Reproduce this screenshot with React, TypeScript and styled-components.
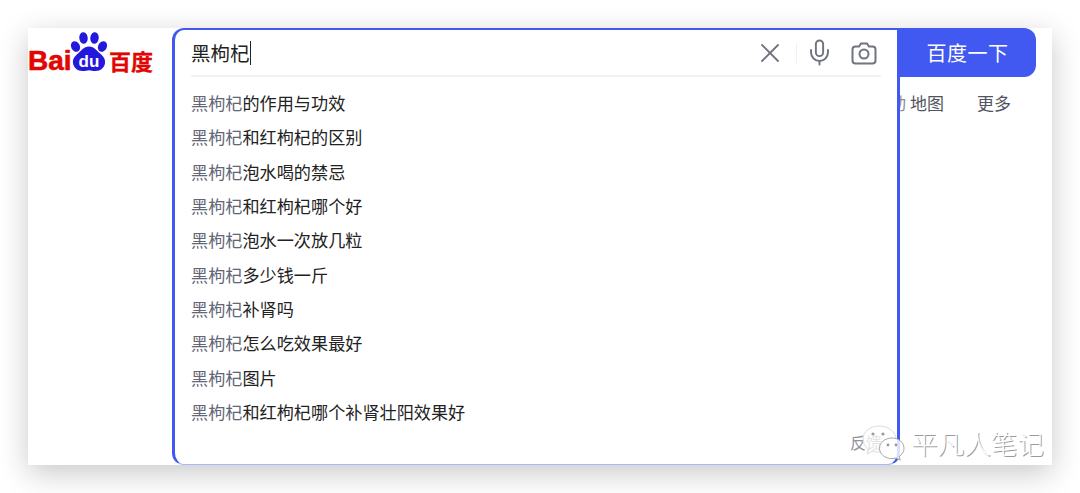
import React from 'react';
import styled, { createGlobalStyle } from 'styled-components';
import { X, Mic } from 'lucide-react';

const GlobalStyle = createGlobalStyle`
  html, body {
    margin: 0;
    height: 100%;
    background: #fff;
    overflow: hidden;
  }
  body {
    font-family: "Noto Sans CJK SC", "Noto Sans", sans-serif;
  }
`;

const Page = styled.div`
  padding: 28px;
  position: relative;
`;

const Card = styled.div`
  display: flex;
  width: 1024px;
  height: 437px;
  background: #fff;
  box-shadow: 0 8px 28px rgba(0, 0, 0, 0.22);
`;

const Logo = styled.div`
  flex: none;
  width: 144px;
  height: 39px;
  display: flex;
  align-items: flex-end;
  padding-top: 4px;
  color: #e10601;
  font-weight: 700;
`;

const LogoLatin = styled.span`
  font-family: "Liberation Sans", sans-serif;
  font-size: 28px;
  line-height: 21px;
  margin-right: -2.6px;
  -webkit-text-stroke: 0.6px #e10601;
`;

const LogoCjk = styled.span`
  font-size: 22px;
  line-height: 21px;
  white-space: nowrap;
  -webkit-text-stroke: 0.3px #e10601;
`;

const PawSvg = styled.svg`
  flex: none;
  width: 40px;
  height: 39px;
`;

const SearchBox = styled.div`
  flex: none;
  width: 728px;
  box-sizing: border-box;
  border: 3px solid #4259f1;
  border-top-width: 2.5px;
  border-bottom: 1.5px solid #a9b8f8;
  border-radius: 12px 0 12px 12px;
  padding: 0 16px;
  position: relative;
  display: flex;
  flex-direction: column;
`;

const InputRow = styled.div`
  height: 45px;
  flex: none;
  display: flex;
  align-items: center;
  border-bottom: 2px solid #f2f2f3;
`;

const Query = styled.div`
  flex: 1;
  font-size: 19.5px;
  line-height: 28px;
  color: #222;
  display: flex;
  align-items: center;
`;

const Caret = styled.span`
  display: inline-block;
  width: 1px;
  height: 24px;
  background: #222;
`;

const Tools = styled.div`
  display: flex;
  align-items: center;
  color: #71747f;
`;

const Separator = styled.span`
  width: 1px;
  height: 20px;
  background: #f0f0f1;
  margin: 0 8px 0 10px;
`;

const CameraSvg = styled.svg`
  width: 26px;
  height: 24px;
  margin: 0 4px 0 17px;
`;

const List = styled.ul`
  list-style: none;
  margin: 9px 0 0;
  padding: 0;
`;

const Item = styled.li`
  height: 34.35px;
  line-height: 34.35px;
  font-size: 17.15px;
  color: #222;
  white-space: nowrap;
`;

const Match = styled.span`
  color: #626675;
`;

const Feedback = styled.span`
  position: absolute;
  right: 15px;
  bottom: 10px;
  font-size: 16px;
  line-height: 24px;
  color: #9195a3;
`;

const Side = styled.div`
  flex: 1;
  min-width: 0;
  overflow: hidden;
  display: flex;
  flex-direction: column;
`;

const SearchButton = styled.div`
  width: 137px;
  height: 49px;
  margin-left: -1px;
  background: #4259f1;
  border-radius: 0 12px 12px 0;
  color: #fff;
  font-size: 20px;
  letter-spacing: 0.5px;
  display: flex;
  align-items: center;
  justify-content: center;
`;

const Links = styled.div`
  display: flex;
  justify-content: flex-end;
  gap: 33px;
  width: 111px;
  margin-top: 14px;
  font-size: 17px;
  line-height: 24px;
  color: #51545e;
  white-space: nowrap;
`;

const CutLink = styled.span`
  margin-right: -29px;
  color: #8a8d99;
`;

const Watermark = styled.div`
  position: absolute;
  left: 862px;
  top: 425px;
  display: flex;
  align-items: center;
  gap: 5px;
  pointer-events: none;
`;

const WatermarkText = styled.span`
  font-size: 26.6px;
  line-height: 36px;
  font-weight: 300;
  color: #fff;
  text-shadow: 1px 1px 0.5px #9a9a9a;
  white-space: nowrap;
`;

const Paw = () => (
  <PawSvg viewBox="0 0 40 39">
    <g fill="#2319dc">
      <ellipse cx="14.5" cy="6" rx="4.200" ry="5.800" transform="rotate(-6 14.5 6)" />
      <ellipse cx="25.5" cy="6" rx="4.200" ry="5.800" transform="rotate(6 25.5 6)" />
      <ellipse cx="6.500" cy="14.500" rx="4.400" ry="5.500" transform="rotate(-25 6.5 14.5)" />
      <ellipse cx="33.500" cy="14.500" rx="4.400" ry="5.500" transform="rotate(25 33.5 14.5)" />
      <path d="M20 14.500c5.500 0 7.500 4 11 7 3.500 3 5.500 5.500 5 9.500-.5 4.500-4.500 8-9.500 8-2.500 0-4.500-.8-6.500-.8s-4 .8-6.500 .8c-5 0-9-3.500-9.500-8-.5-4 1.500-6.500 5-9.500 3.500-3 5.500-7 11-7z" />
    </g>
    <text
      x="20"
      y="35"
      textAnchor="middle"
      fill="#fff"
      fontFamily='"Liberation Sans", sans-serif'
      fontWeight="700"
      fontSize="17"
    >
      du
    </text>
  </PawSvg>
);

const Camera = () => (
  <CameraSvg viewBox="0 0 26 24" fill="none" stroke="currentColor" strokeWidth="2">
    <path d="M4.500 5.500h3.500l2-3h6l2 3h3.500a3 3 0 0 1 3 3v11a3 3 0 0 1-3 3h-17a3 3 0 0 1-3-3v-11a3 3 0 0 1 3-3z" />
    <circle cx="13" cy="13" r="4.500" />
  </CameraSvg>
);

const Bubbles = () => (
  <svg width="44" height="36" viewBox="0 0 44 36">
    <path d="M17 1C8.500 1 1 6.500 1 14c0 4.200 2.200 7.800 5.600 10.200L5 29l5.500-2.800c2 .6 4.300 .9 6.500 .9 8.500 0 17-5.600 17-13.100S25.500 1 17 1z" fill="rgba(255,255,255,.72)" stroke="#dcdcdc" />
    <path d="M30 13c-7 0-12.500 4.600-12.500 10.300S23 33.600 30 33.600c1.400 0 2.800-.2 4-.6l4.300 2.200-1.200-3.700c3-1.900 4.900-4.900 4.900-8.200C42 17.600 37 13 30 13z" fill="rgba(255,255,255,.82)" stroke="#a8a8a8" />
    <g fill="#9a9a9a">
      <circle cx="11" cy="9" r="1.600" />
      <circle cx="21" cy="9" r="1.600" />
      <circle cx="26" cy="20" r="1.400" />
      <circle cx="34" cy="20" r="1.400" />
    </g>
  </svg>
);

const suggestions = [
  '的作用与功效',
  '和红枸杞的区别',
  '泡水喝的禁忌',
  '和红枸杞哪个好',
  '泡水一次放几粒',
  '多少钱一斤',
  '补肾吗',
  '怎么吃效果最好',
  '图片',
  '和红枸杞哪个补肾壮阳效果好',
];

const App = () => (
  <Page>
    <GlobalStyle />
    <Card>
      <Logo>
        <LogoLatin>Bai</LogoLatin>
        <Paw />
        <LogoCjk>百度</LogoCjk>
      </Logo>
      <SearchBox>
        <InputRow>
          <Query>
            黑枸杞
            <Caret />
          </Query>
          <Tools>
            <X size={32} strokeWidth={1.35} />
            <Separator />
            <Mic size={29} strokeWidth={1.6} />
            <Camera />
          </Tools>
        </InputRow>
        <List>
          {suggestions.map((text) => (
            <Item key={text}>
              <Match>黑枸杞</Match>
              {text}
            </Item>
          ))}
        </List>
        <Feedback>反馈</Feedback>
      </SearchBox>
      <Side>
        <SearchButton>百度一下</SearchButton>
        <Links>
          <CutLink>动</CutLink>
          <span>地图</span>
          <span>更多</span>
        </Links>
      </Side>
    </Card>
    <Watermark>
      <Bubbles />
      <WatermarkText>平凡人笔记</WatermarkText>
    </Watermark>
  </Page>
);

export default App;
